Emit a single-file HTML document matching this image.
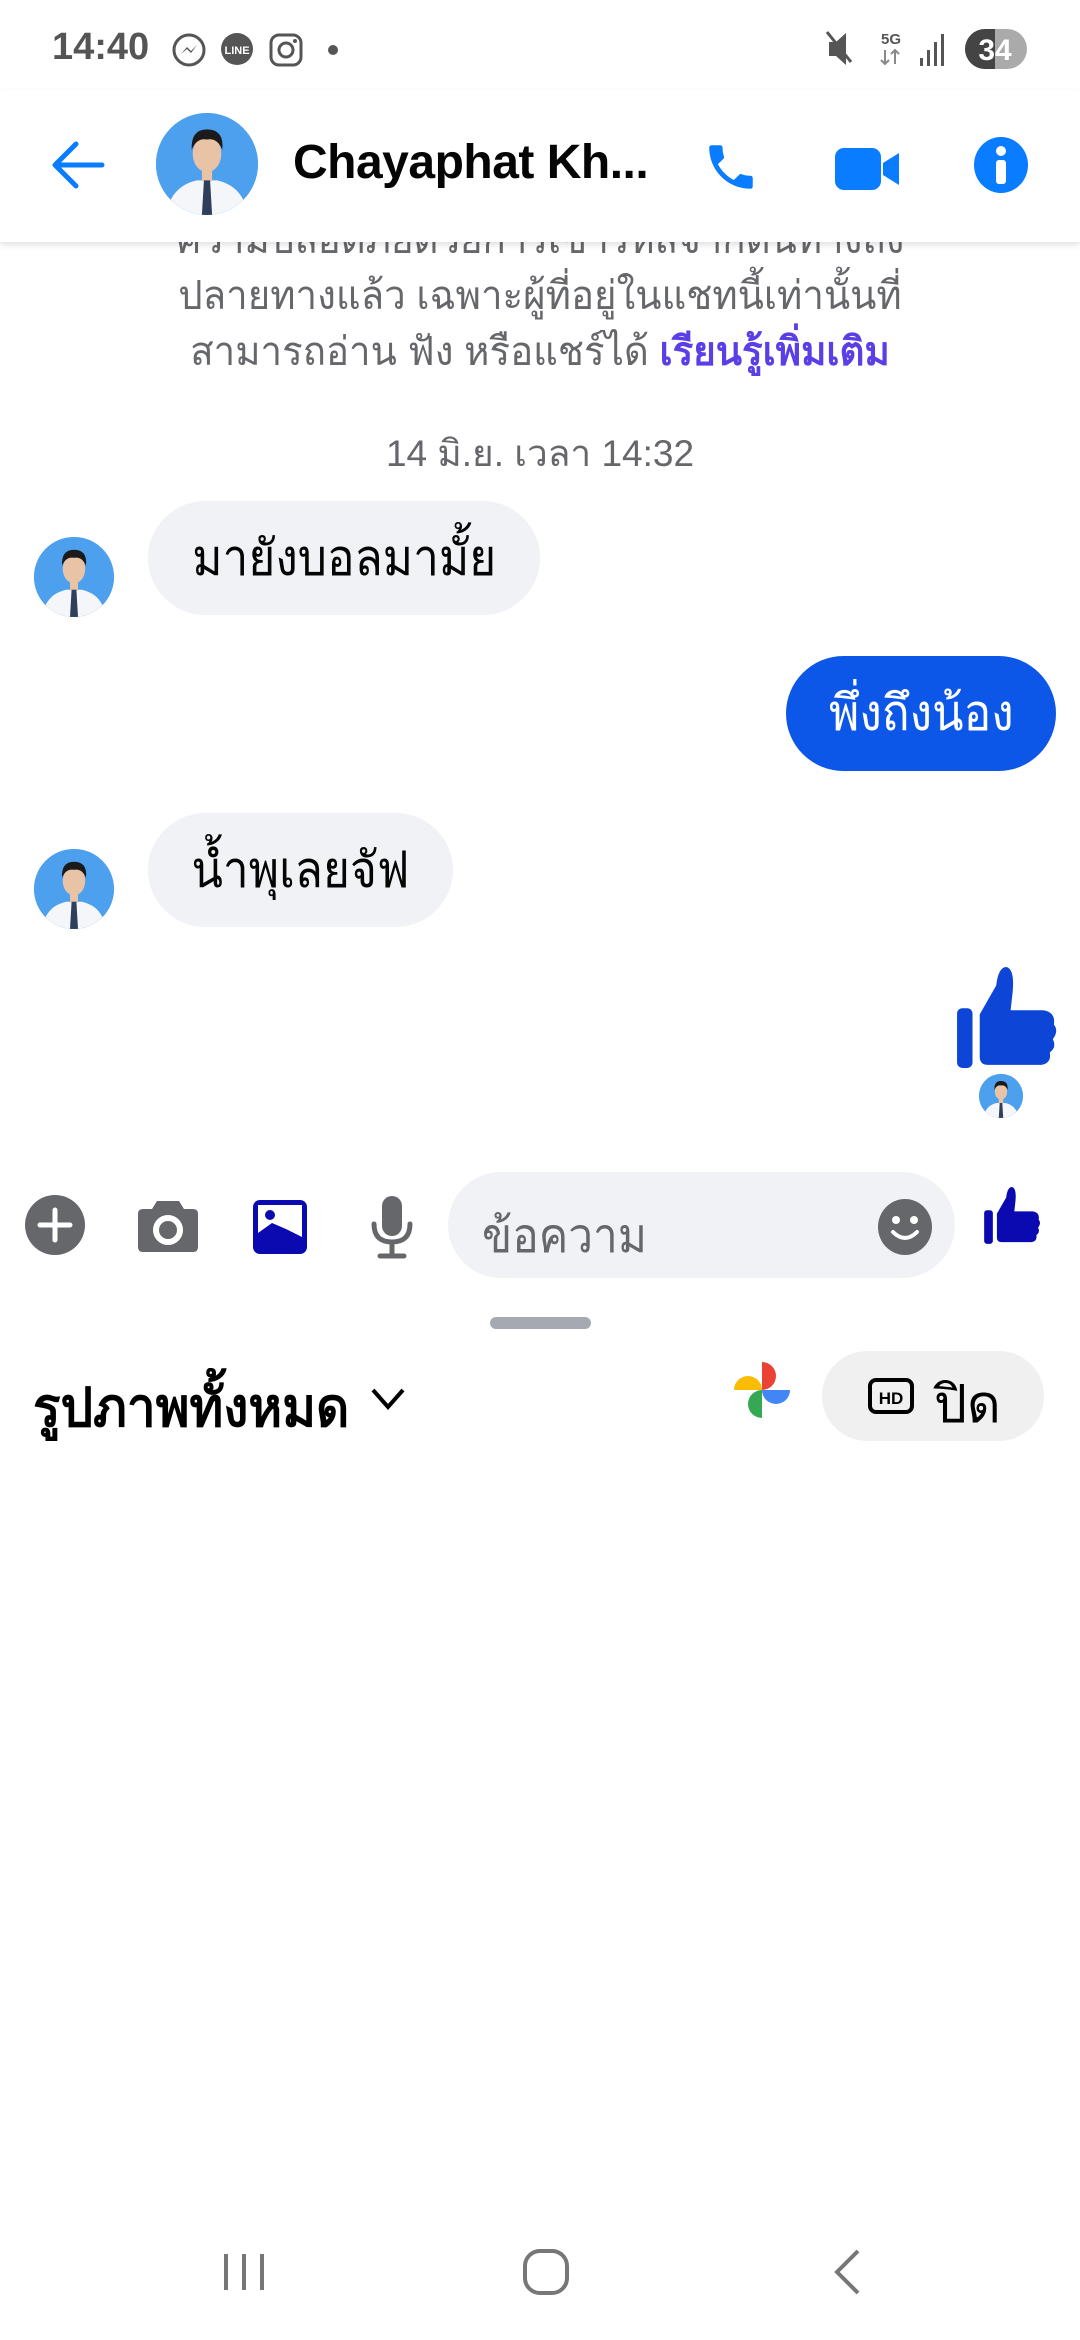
<!DOCTYPE html>
<html><head><meta charset="utf-8">
<style>
*{margin:0;padding:0;box-sizing:border-box}
body{width:1080px;height:2340px;background:#fff;position:relative;overflow:hidden;font-family:"Liberation Sans","DejaVu Sans",sans-serif;color:#050505}
.a{position:absolute}
.av{position:absolute;border-radius:50%;background:#4da0ee;overflow:hidden}
.av svg{width:100%;height:100%}
.bub{position:absolute;border-radius:60px;font-size:50px;display:flex;align-items:center;justify-content:center}
.bub span{display:inline-block;transform:scaleX(.92)}
</style></head><body>
<svg width="0" height="0" style="position:absolute"><defs>
<symbol id="p" viewBox="0 0 100 100"><rect width="100" height="100" fill="#4da0ee"/><path d="M10 100 Q14 72 40 66 L60 66 Q86 72 90 100Z" fill="#f4f6fa"/><ellipse cx="50" cy="40" rx="14" ry="18" fill="#e9c3a6"/><path d="M35 36 Q34 16 50 16 Q67 16 65 36 Q60 24 50 26 Q40 24 35 36Z" fill="#1b1b1b"/><rect x="45" y="55" width="10" height="12" fill="#e9c3a6"/><path d="M47 66 L53 66 L55 100 L45 100Z" fill="#2d3f5a"/></symbol>
</defs></svg>

<!-- status bar -->
<div class="a" style="left:52px;top:26px;font-size:38px;color:#555;font-weight:600">14:40</div>
<svg class="a" style="left:170px;top:32px" width="200" height="40" viewBox="0 0 200 40">
<circle cx="19" cy="18" r="15" fill="none" stroke="#555" stroke-width="3"/><path d="M11 22l6-7 4 4 6-6-6 8-4-4z" fill="#555"/>
<circle cx="67" cy="17" r="16" fill="#555"/><text x="67" y="22" font-size="11" fill="#fff" text-anchor="middle" font-family="Liberation Sans" font-weight="bold">LINE</text>
<rect x="101" y="3" width="30" height="30" rx="8" fill="none" stroke="#555" stroke-width="3"/><circle cx="116" cy="18" r="7" fill="none" stroke="#555" stroke-width="3"/><circle cx="125" cy="9" r="2" fill="#555"/>
<circle cx="163" cy="18" r="5" fill="#555"/></svg>
<svg class="a" style="left:825px;top:26px" width="205" height="46" viewBox="0 0 205 46">
<path d="M4 16h7l10-9v32l-10-9H4z" fill="#555"/><path d="M2 6l24 30" stroke="#555" stroke-width="3"/>
<text x="56" y="18" font-size="15" fill="#555" font-family="Liberation Sans" font-weight="bold">5G</text><path d="M60 24v14M56 34l4 4 4-4M70 38V24M66 28l4-4 4 4" stroke="#888" stroke-width="2" fill="none"/>
<rect x="95" y="32" width="3" height="8" fill="#555"/><rect x="102" y="24" width="3" height="16" fill="#555"/><rect x="109" y="16" width="3" height="24" fill="#555"/><rect x="116" y="8" width="3" height="32" fill="#555"/>
<rect x="140" y="3" width="62" height="40" rx="20" fill="#aaa"/><path d="M160 3h10v40h-10a20 20 0 0 1 0-40z" fill="#444"/><text x="170" y="34" font-size="30" fill="#fff" text-anchor="middle" font-family="Liberation Sans" font-weight="bold">34</text></svg>

<!-- header -->
<div class="a" style="left:0;top:90px;width:1080px;height:152px;background:#fff;box-shadow:0 3px 6px rgba(0,0,0,.12);z-index:2">
<svg class="a" style="left:50px;top:50px" width="56" height="50" viewBox="0 0 56 50"><path d="M52 25H6M26 4L5 25l21 21" fill="none" stroke="#0a7cff" stroke-width="5" stroke-linecap="round" stroke-linejoin="round"/></svg>
<div class="av" style="left:156px;top:23px;width:102px;height:102px"><svg><use href="#p"/></svg></div>
<div class="a" style="left:293px;top:45px;font-size:48px;font-weight:600;color:#050505;letter-spacing:-0.5px">Chayaphat Kh...</div>
<svg class="a" style="left:702px;top:48px" width="58" height="58" viewBox="0 0 24 24"><path fill="#0a7cff" d="M6.6 10.8c1.4 2.8 3.8 5.1 6.6 6.6l2.2-2.2c.3-.3.7-.4 1-.2 1.1.4 2.3.6 3.6.6.6 0 1 .4 1 1V20c0 .6-.4 1-1 1C10.6 21 3 13.4 3 4c0-.6.4-1 1-1h3.5c.6 0 1 .4 1 1 0 1.3.2 2.5.6 3.6.1.3 0 .7-.2 1z"/></svg>
<svg class="a" style="left:833px;top:54px" width="68" height="50" viewBox="0 0 68 50"><rect x="2" y="4" width="46" height="42" rx="9" fill="#0a7cff"/><path d="M50 19l16-10v32L50 31z" fill="#0a7cff"/></svg>
<svg class="a" style="left:973px;top:46px" width="56" height="58" viewBox="0 0 56 58"><ellipse cx="28" cy="29" rx="27" ry="28" fill="#0a7cff"/><circle cx="28" cy="15" r="5" fill="#fff"/><rect x="23" y="24" width="10" height="24" rx="3" fill="#fff"/></svg>
</div>

<!-- disclaimer -->
<div class="a" style="left:0;top:212px;width:1080px;text-align:center;font-size:40px;line-height:56px;color:#65676b;transform:scaleX(.96)">ความปลอดภัยด้วยการเข้ารหัสจากต้นทางถึง<br>ปลายทางแล้ว เฉพาะผู้ที่อยู่ในแชทนี้เท่านั้นที่<br>สามารถอ่าน ฟัง หรือแชร์ได้ <b style="color:#5b3fe6">เรียนรู้เพิ่มเติม</b></div>
<div class="a" style="left:0;top:424px;width:1080px;text-align:center;font-size:37px;color:#65676b">14 มิ.ย. เวลา 14:32</div>

<!-- messages -->
<div class="av" style="left:34px;top:537px;width:80px;height:80px"><svg><use href="#p"/></svg></div>
<div class="bub" style="left:148px;top:501px;width:392px;height:114px;background:#f0f2f5"><span>มายังบอลมามั้ย</span></div>
<div class="bub" style="left:786px;top:656px;width:270px;height:115px;background:#0d57e8;color:#fff"><span>พึ่งถึงน้อง</span></div>
<div class="av" style="left:34px;top:849px;width:80px;height:80px"><svg><use href="#p"/></svg></div>
<div class="bub" style="left:148px;top:813px;width:305px;height:114px;background:#f0f2f5"><span>น้ำพุเลยจัฟ</span></div>
<svg class="a" style="left:955px;top:967px" width="103" height="103" viewBox="0 0 100 100"><rect x="2" y="40" width="15" height="58" rx="5" fill="#0d45d6"/><path d="M24 46 L40 18 Q42 0 50 0 Q58 2 56 24 L54 42 L86 42 Q98 44 96 56 Q101 62 95 70 Q99 78 92 83 Q94 93 84 95 L32 95 Q24 95 24 87Z" fill="#0d45d6"/></svg>
<div class="av" style="left:979px;top:1074px;width:44px;height:44px"><svg><use href="#p"/></svg></div>

<!-- composer -->
<svg class="a" style="left:24px;top:1194px" width="62" height="62" viewBox="0 0 62 62"><circle cx="31" cy="31" r="30" fill="#65676b"/><path d="M31 16v30M16 31h30" stroke="#fff" stroke-width="5" stroke-linecap="round"/></svg>
<svg class="a" style="left:137px;top:1197px" width="62" height="58" viewBox="0 0 62 58"><path d="M20 4h22l5 8h9q5 0 5 5v33q0 5-5 5H6q-5 0-5-5V17q0-5 5-5h9z" fill="#65676b"/><circle cx="31" cy="33" r="12" fill="none" stroke="#fff" stroke-width="6"/></svg>
<svg class="a" style="left:252px;top:1199px" width="56" height="56" viewBox="0 0 56 56"><rect x="1" y="1" width="54" height="54" rx="7" fill="#0a0ab0"/><rect x="6" y="6" width="44" height="40" fill="#fff"/><path d="M6 46V34l14-10 14 6 16 8v8z" fill="#0a0ab0"/><circle cx="18" cy="16" r="5" fill="#0a0ab0"/></svg>
<svg class="a" style="left:370px;top:1196px" width="44" height="64" viewBox="0 0 44 64"><rect x="12" y="0" width="20" height="40" rx="10" fill="#65676b"/><path d="M4 28q0 18 18 18t18-18M22 46v12M10 60h24" fill="none" stroke="#65676b" stroke-width="5" stroke-linecap="round"/></svg>
<div class="a" style="left:448px;top:1172px;width:507px;height:106px;border-radius:53px;background:#f0f2f5"></div>
<div class="a" style="left:482px;top:1198px;font-size:48px;color:#65676b;transform:scaleX(.92);transform-origin:left">ข้อความ</div>
<svg class="a" style="left:877px;top:1198px" width="56" height="58" viewBox="0 0 56 58"><ellipse cx="28" cy="29" rx="27" ry="28" fill="#65676b"/><circle cx="19" cy="22" r="4" fill="#fff"/><circle cx="37" cy="22" r="4" fill="#fff"/><path d="M16 34q12 12 24 0" fill="none" stroke="#fff" stroke-width="4" stroke-linecap="round"/></svg>
<svg class="a" style="left:983px;top:1185px" width="58" height="62" viewBox="0 0 100 100"><rect x="2" y="40" width="15" height="58" rx="5" fill="#0a0ab0"/><path d="M24 46 L40 18 Q42 0 50 0 Q58 2 56 24 L54 42 L86 42 Q98 44 96 56 Q101 62 95 70 Q99 78 92 83 Q94 93 84 95 L32 95 Q24 95 24 87Z" fill="#0a0ab0"/></svg>

<div class="a" style="left:490px;top:1317px;width:101px;height:12px;border-radius:6px;background:#a5aab2"></div>

<div class="a" style="left:33px;top:1364px;font-size:54px;font-weight:bold;color:#000;transform:scaleX(.95);transform-origin:left">รูปภาพทั้งหมด</div>
<svg class="a" style="left:370px;top:1386px" width="36" height="26" viewBox="0 0 36 26"><path d="M3 4l15 17L33 4" fill="none" stroke="#000" stroke-width="4"/></svg>
<svg class="a" style="left:732px;top:1360px" width="60" height="60" viewBox="0 0 60 60"><path d="M30 30V2a14 14 0 0 1 0 28z" fill="#ea4335"/><path d="M30 30h28a14 14 0 0 1-28 0z" fill="#4285f4"/><path d="M30 30v28a14 14 0 0 1 0-28z" fill="#34a853"/><path d="M30 30H2a14 14 0 0 1 28 0z" fill="#fbbc05"/></svg>
<div class="a" style="left:822px;top:1351px;width:222px;height:90px;border-radius:45px;background:#f0f0f0"></div>
<svg class="a" style="left:868px;top:1378px" width="46" height="36" viewBox="0 0 46 36"><rect x="2" y="2" width="42" height="32" rx="6" fill="none" stroke="#000" stroke-width="4"/><text x="23" y="26" font-size="17" font-weight="bold" text-anchor="middle" font-family="Liberation Sans">HD</text></svg>
<div class="a" style="left:934px;top:1362px;font-size:52px;color:#000">ปิด</div>

<!-- nav -->
<svg class="a" style="left:222px;top:2252px" width="44" height="40" viewBox="0 0 44 40"><path d="M4 2v36M22 2v36M40 2v36" stroke="#777" stroke-width="4"/></svg>
<svg class="a" style="left:522px;top:2248px" width="48" height="48" viewBox="0 0 48 48"><rect x="3" y="3" width="42" height="42" rx="15" fill="none" stroke="#777" stroke-width="4"/></svg>
<svg class="a" style="left:832px;top:2248px" width="30" height="48" viewBox="0 0 30 48"><path d="M26 3L5 24l21 21" fill="none" stroke="#777" stroke-width="4"/></svg>
</body></html>
